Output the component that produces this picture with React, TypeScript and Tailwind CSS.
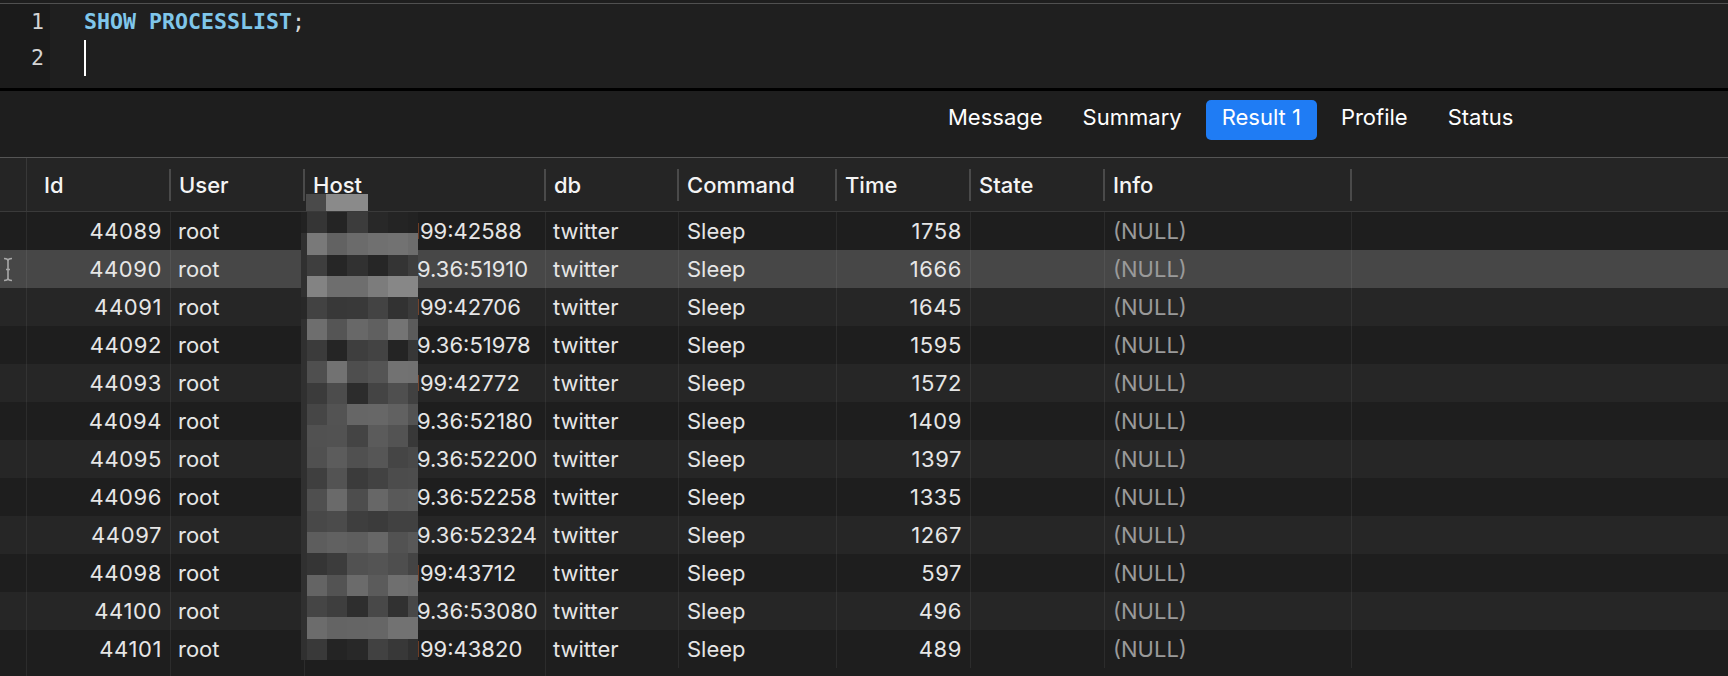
import React from "react";

type Row = { id: string; host: string; kind: "A" | "B"; time: string };

const rows: Row[] = [
  { id: "44089", host: "199:42588", kind: "A", time: "1758" },
  { id: "44090", host: "9.36:51910", kind: "B", time: "1666" },
  { id: "44091", host: "199:42706", kind: "A", time: "1645" },
  { id: "44092", host: "9.36:51978", kind: "B", time: "1595" },
  { id: "44093", host: "199:42772", kind: "A", time: "1572" },
  { id: "44094", host: "9.36:52180", kind: "B", time: "1409" },
  { id: "44095", host: "9.36:52200", kind: "B", time: "1397" },
  { id: "44096", host: "9.36:52258", kind: "B", time: "1335" },
  { id: "44097", host: "9.36:52324", kind: "B", time: "1267" },
  { id: "44098", host: "199:43712", kind: "A", time: "597" },
  { id: "44100", host: "9.36:53080", kind: "B", time: "496" },
  { id: "44101", host: "199:43820", kind: "A", time: "489" },
];

const rowBg = (i: number) => {
  if (i === 1) return "bg-[#474747]";
  if (i === 0) return "bg-[#1e1e1e]";
  return i % 2 === 0 ? "bg-[#262626]" : "bg-[#1e1e1e]";
};

const bandBase = [
  0x2b, 0x68, 0x33, 0x74, 0x31, 0x66, 0x36, 0x62, 0x3c, 0x58, 0x48, 0x55, 0x4c, 0x56, 0x48,
  0x56, 0x44, 0x64, 0x3e, 0x62, 0x34,
];
const mosaicCols = [6, 20, 20, 21, 20, 20, 10];

function hash(a: number, b: number) {
  let x = (a * 73856093) ^ (b * 19349663);
  x = (x ^ (x >>> 13)) * 1274126177;
  x = x ^ (x >>> 16);
  return ((x >>> 0) % 1000) / 1000;
}

function Mosaic() {
  return (
    <div className="flex flex-col w-[117px]">
      {bandBase.map((b, r) => (
        <div key={r} className="flex h-[21.33px]">
          {mosaicCols.map((w, c) => {
            let v = b + Math.round((hash(r + 3, c + 7) - 0.5) * 40);
            if (c === 0) v = Math.min(v, 0x30);
            v = Math.max(0x22, Math.min(0x9a, v));
            return (
              <div
                key={c}
                style={{ width: w, backgroundColor: `rgb(${v},${v},${v})` }}
              />
            );
          })}
        </div>
      ))}
    </div>
  );
}

function IBeam() {
  return (
    <svg width="10" height="25" viewBox="0 0 10 25" className="block">
      <path
        d="M1 1.5 Q5 1.5 5 4 L5 21 Q5 23.5 1 23.5 M9 1.5 Q5 1.5 5 4 M5 21 Q5 23.5 9 23.5 M3 12.5 H7"
        stroke="#a8a8a8"
        strokeWidth="1.6"
        fill="none"
      />
    </svg>
  );
}

const HeaderCell = ({
  w,
  label,
  pl = "pl-[8px]",
}: {
  w: string;
  label: string;
  pl?: string;
}) => (
  <div className={`${w} h-full flex items-center`}>
    <div className={`flex-1 ${pl} text-[#f4f4f4] font-medium whitespace-nowrap leading-[26px]`}>{label}</div>
    <div className="w-[2px] h-[32px] bg-[#4a4a4a]" />
  </div>
);

export default function App() {
  return (
    <div className="w-[1728px] h-[676px] overflow-hidden bg-[#1e1e1e] font-['Inter',sans-serif] text-[22px] leading-none">
      {/* top strip */}
      <div className="h-[3px] bg-[#1e1e1e]" />
      <div className="h-px bg-[#505050]" />

      {/* editor */}
      <div className="flex h-[84px] font-['DejaVu_Sans_Mono',monospace] text-[21.6px]">
        <div className="w-[50px] bg-[#1b1b1b] flex flex-col items-end pr-[6px] text-[#d4d4d4]">
          <div className="h-[36px] flex items-center">1</div>
          <div className="h-[36px] flex items-center">2</div>
        </div>
        <div className="flex-1 bg-[#1f1f1f] pl-[34px] flex flex-col">
          <div className="h-[36px] flex items-center font-bold text-[#7fc6ea]">
            SHOW PROCESSLIST<span className="text-[#d8d8d8] font-normal">;</span>
          </div>
          <div className="h-[36px] flex items-center">
            <div className="w-[2px] h-[36px] bg-white" />
          </div>
        </div>
      </div>
      <div className="h-[3px] bg-black" />

      {/* tab bar */}
      <div className="h-[66px] bg-[#1e1e1e] flex items-start pt-[9px] pl-[932px] gap-[8px]">
        {["Message", "Summary", "Result 1", "Profile", "Status"].map((t) => (
          <div
            key={t}
            className={`h-[40px] px-[16px] pb-[7px] flex items-center rounded-[5px] text-white ${
              t === "Result 1" ? "bg-[#1f7cf4]" : ""
            }`}
          >
            {t}
          </div>
        ))}
      </div>
      <div className="h-px bg-[#555555]" />

      {/* table */}
      <div className="relative">
        {/* header */}
        <div className="flex h-[53px] bg-[#252525]">
          <div className="w-[27px] h-full border-r border-[#383838]" />
          <HeaderCell w="w-[144px]" label="Id" pl="pl-[17px]" />
          <HeaderCell w="w-[134px]" label="User" />
          <HeaderCell w="w-[241px]" label="Host" />
          <HeaderCell w="w-[133px]" label="db" />
          <HeaderCell w="w-[158px]" label="Command" />
          <HeaderCell w="w-[134px]" label="Time" />
          <HeaderCell w="w-[134px]" label="State" />
          <HeaderCell w="w-[247px]" label="Info" />
          <div className="flex-1" />
        </div>
        <div className="h-px bg-[#3a3a3a]" />

        {/* rows */}
        {rows.map((r, i) => (
          <div key={r.id} className={`flex h-[38px] ${rowBg(i)} text-[#e6e6e6]`}>
            <div className="w-[27px] h-full border-r border-[#ffffff10] flex items-center pl-[3px]">
              {i === 1 ? <IBeam /> : null}
            </div>
            <div className="w-[144px] h-full border-r border-[#ffffff10] flex items-center justify-end pr-[8px] tracking-[0.6px]">
              {r.id}
            </div>
            <div className="w-[134px] h-full border-r border-[#ffffff10] flex items-center pl-[7px]">
              root
            </div>
            <div
              className={`w-[241px] h-full border-r border-[#ffffff10] flex items-center overflow-hidden whitespace-nowrap ${
                r.kind === "A" ? "pl-[106px]" : "pl-[112px]"
              }`}
            >
              {r.host}
            </div>
            <div className="w-[133px] h-full border-r border-[#ffffff10] flex items-center pl-[7px]">
              twitter
            </div>
            <div className="w-[158px] h-full border-r border-[#ffffff10] flex items-center pl-[8px]">
              Sleep
            </div>
            <div className="w-[134px] h-full border-r border-[#ffffff10] flex items-center justify-end pr-[8px] tracking-[0.6px]">
              {r.time}
            </div>
            <div className="w-[134px] h-full border-r border-[#ffffff10]" />
            <div className="w-[247px] h-full border-r border-[#ffffff10] flex items-center pl-[8px] text-[#9a9a9a]">
              (NULL)
            </div>
            <div className="flex-1" />
          </div>
        ))}
        <div className="flex h-[38px] bg-[#1e1e1e]">
          <div className="w-[27px] h-full border-r border-[#ffffff10]" />
          <div className="w-[144px] h-full border-r border-[#ffffff10]" />
          <div className="w-[134px] h-full border-r border-[#ffffff10]" />
          <div className="w-[241px] h-full border-r border-[#ffffff10]" />
        </div>

        {/* pixelated host overlay */}
        <div className="absolute left-[306px] top-[36px] flex h-[17px]">
          <div className="w-[20px] bg-[#4a4a4a]" />
          <div className="w-[42px] bg-[#8a8a8a]" />
        </div>
        <div className="absolute left-[301px] top-[54px]">
          <Mosaic />
        </div>
      </div>
    </div>
  );
}
